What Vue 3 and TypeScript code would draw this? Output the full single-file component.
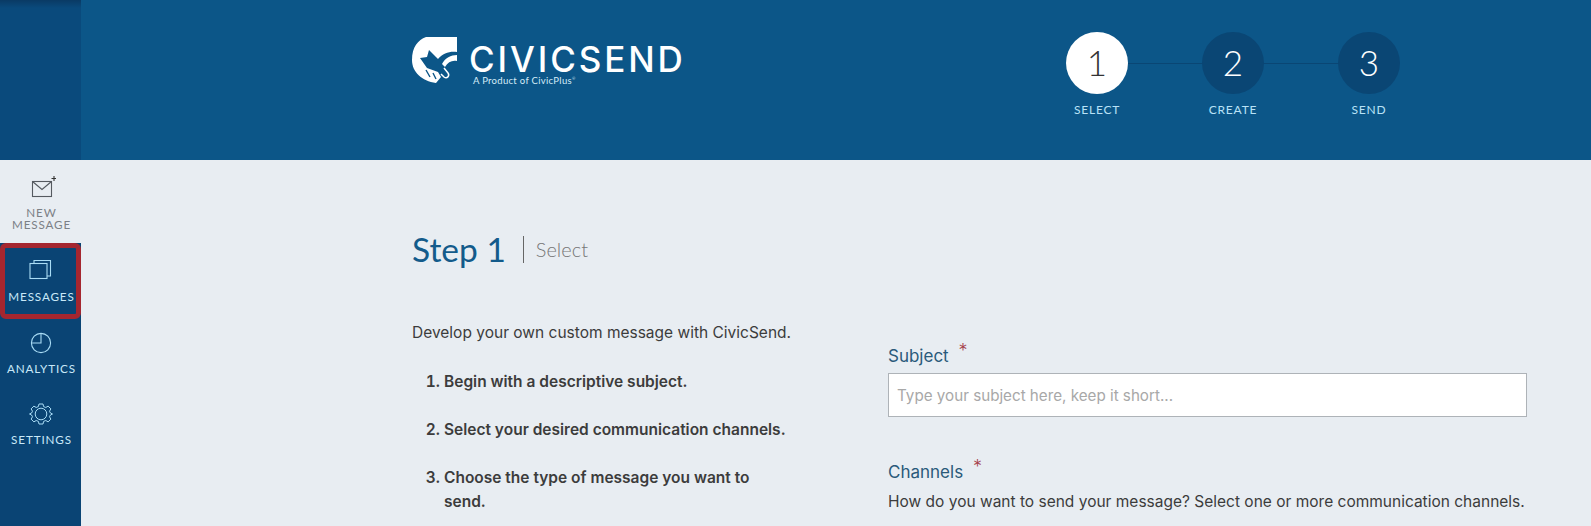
<script setup lang="ts">
const steps = [
  { n: 1, label: "SELECT", current: true },
  { n: 2, label: "CREATE" },
  { n: 3, label: "SEND" },
];

const instructions = [
  "Begin with a descriptive subject.",
  "Select your desired communication channels.",
  "Choose the type of message you want to send.",
];
</script>

<template>
  <div class="page">
    <header class="top">
      <div class="top-corner"></div>
      <div class="top-bar">
        <div class="logo">
          <svg class="logo-mark" viewBox="0 0 45 46" width="45" height="46" fill="#fff">
            <!-- main body of the mark -->
            <path d="M45 0 V15 C38 14 31 16 26 22 L17 13 L15 20 L8 21 L15 31 L26 35 L29 40 L24 46 C10 44 0 35 0 23 C0 10 6 3 14 0 Z" />
            <path d="M14 33 L18 40 M21 36 L24 42" fill="none" stroke="#0c5688" stroke-width="1.4" />
            <path d="M45 18 V24 C40 23 36 25 33 30 L30 27 C33 21 39 18 45 18 Z" />
            <path d="M32 31 L36 36 C38 39 35 42 32 40 L29 37" fill="none" stroke="#fff" stroke-width="1.5" />
          </svg>
          <div class="logo-text">
            <div class="logo-name">CIVICSEND</div>
            <div class="logo-sub">A Product of CivicPlus<sup>®</sup></div>
          </div>
        </div>
        <div class="steps">
          <div v-for="s in steps" :key="s.n" class="step">
            <div class="step-circle" :class="{ current: s.current }">{{ s.n }}</div>
            <div class="step-label">{{ s.label }}</div>
          </div>
        </div>
      </div>
    </header>

    <div class="body">
      <nav class="side">
        <div class="side-light">
          <div class="nav-item light">
            <svg viewBox="0 0 30 26" width="30" height="26" fill="none" stroke="#555a60" stroke-width="1.1">
              <rect x="6.5" y="6.5" width="19" height="15" />
              <path d="M6.5 6.5 L16 14.5 L25.5 6.5" />
              <path d="M28 1 V6 M25.5 3.5 H30.5" stroke="#333" />
            </svg>
            <div class="nav-label"><span>NEW</span><span>MESSAGE</span></div>
          </div>
        </div>
        <div class="nav-item active">
          <svg viewBox="0 0 26 24" width="26" height="24" fill="none" stroke="#a9dcf5" stroke-width="1.1">
            <rect x="2" y="5.5" width="17" height="15" />
            <path d="M6 5.5 V2.5 H22.5 V18 H19" />
          </svg>
          <div class="nav-label"><span>MESSAGES</span></div>
        </div>
        <div class="nav-item">
          <svg viewBox="0 0 24 24" width="24" height="24" fill="none" stroke="#a9dcf5" stroke-width="1.1">
            <circle cx="12" cy="12" r="9.6" />
            <path d="M12 2.4 V12 H2.4" />
          </svg>
          <div class="nav-label"><span>ANALYTICS</span></div>
        </div>
        <div class="nav-item">
          <svg viewBox="0 0 24 24" width="24" height="24" fill="none" stroke="#a9dcf5" stroke-width="1">
            <circle cx="12" cy="12" r="5.8" />
            <path d="M10 2 H14 L14.6 4.6 L16.8 5.5 L19.1 4.1 L21.9 6.9 L20.5 9.2 L21.4 11 L23.5 12 L21.4 13 L20.5 14.8 L21.9 17.1 L19.1 19.9 L16.8 18.5 L14.6 19.4 L14 22 H10 L9.4 19.4 L7.2 18.5 L4.9 19.9 L2.1 17.1 L3.5 14.8 L2.6 13 L0.5 12 L2.6 11 L3.5 9.2 L2.1 6.9 L4.9 4.1 L7.2 5.5 L9.4 4.6 Z" stroke-linejoin="round" />
          </svg>
          <div class="nav-label"><span>SETTINGS</span></div>
        </div>
      </nav>

      <main class="main">
        <h1 class="title">
          <span class="title-step">Step 1</span>
          <span class="title-name">Select</span>
        </h1>
        <div class="columns">
          <section class="intro">
            <p>Develop your own custom message with CivicSend.</p>
            <ol>
              <li v-for="item in instructions" :key="item">{{ item }}</li>
            </ol>
          </section>
          <section class="form">
            <label class="field-label">Subject <span class="req">*</span></label>
            <input class="subject" type="text" placeholder="Type your subject here, keep it short..." />
            <label class="field-label channels">Channels <span class="req">*</span></label>
            <p class="hint">How do you want to send your message? Select one or more communication channels.</p>
          </section>
        </div>
      </main>
    </div>
  </div>
</template>

<style scoped>
.page {
  width: 1591px;
  height: 526px;
  overflow: hidden;
  font-family: Lato, "Open Sans", sans-serif;
  background: #e8edf2;
}

.top {
  display: flex;
  height: 160px;
}

.top-corner {
  width: 81px;
  background: linear-gradient(to bottom, #0a3a64 0, #0a4a7c 8px, #0a4a7c 100%);
}

.top-bar {
  flex: 1;
  display: flex;
  background: #0c5688;
  padding: 32px 0 0 331px;
}

.logo {
  display: flex;
  align-items: flex-start;
  gap: 12px;
  width: 654px;
  padding-top: 5px;
}

.logo-name {
  font-family: Inter, sans-serif;
  font-size: 35px;
  line-height: 30px;
  font-weight: 500;
  letter-spacing: 2.9px;
  color: #fff;
  margin-top: 7px;
}

.logo-sub {
  font-size: 9.5px;
  line-height: 11px;
  color: #d6ecf8;
  margin-left: 4px;
  margin-top: 1px;
  letter-spacing: 0.3px;
}

.logo-sub sup {
  font-size: 4px;
  line-height: 0;
}

.steps {
  display: flex;
  gap: 74px;
  background: linear-gradient(#0a4674, #0a4674) no-repeat center 31px / 270px 1px;
  height: 90px;
}

.step {
  width: 62px;
  display: flex;
  flex-direction: column;
  align-items: center;
}

.step-circle {
  width: 62px;
  height: 62px;
  border-radius: 50%;
  background: #0a4674;
  color: #fff;
  font-size: 35px;
  font-weight: 300;
  line-height: 60px;
  text-align: center;
}

.step-circle.current {
  background: #fff;
  color: #333;
}

.step-label {
  margin-top: 8px;
  font-size: 12px;
  letter-spacing: 0.8px;
  color: #b9e2f7;
  white-space: nowrap;
}

.body {
  display: flex;
  height: 366px;
}

.side {
  width: 81px;
  background: #0a4474;
}

.side-light {
  background: #e8edf2;
  height: 83px;
  padding-top: 15px;
  box-sizing: border-box;
}

.nav-item {
  display: flex;
  flex-direction: column;
  align-items: center;
  color: #c8e8f8;
  height: 71px;
  padding-top: 13px;
  box-sizing: border-box;
}

.nav-item.light {
  color: #7b8086;
  height: auto;
  padding: 0;
}

.nav-item.active {
  height: 76px;
  margin-bottom: -1px;
  border: 5px solid #a5262f;
  border-radius: 6px;
  padding-top: 10px;
}

.nav-label {
  display: flex;
  flex-direction: column;
  align-items: center;
  margin-top: 7px;
  padding-left: 2px;
  font-size: 11.7px;
  line-height: 12px;
  letter-spacing: 0.85px;
  white-space: nowrap;
}

.nav-item.active .nav-label {
  margin-top: 8px;
}

.nav-item.light .nav-label {
  margin-top: 5px;
}

.main {
  flex: 1;
  padding: 0 0 0 331px;
}

.title {
  margin: 69px 0 0;
  display: flex;
  align-items: center;
  font-weight: 400;
  height: 40px;
}

.title-step {
  font-size: 33.5px;
  color: #135b8b;
  padding-right: 17px;
  border-right: 1px solid #666;
  line-height: 27px;
}

.title-name {
  font-size: 20px;
  font-weight: 300;
  color: #777;
  margin-left: 12px;
}

.columns {
  display: flex;
}

.intro {
  width: 378px;
  margin-right: 98px;
  font-family: Inter, sans-serif;
  font-size: 15.5px;
  color: #3c3c3c;
}

.intro p {
  margin: 54px 0 0;
  line-height: 20px;
  white-space: nowrap;
}

.intro ol {
  margin: 27px 0 0;
  padding-left: 32px;
}

.intro li {
  font-weight: 600;
  line-height: 24px;
  margin-bottom: 24px;
}

.form {
  width: 640px;
  padding-top: 77px;
  font-family: Inter, sans-serif;
}

.field-label {
  display: block;
  font-size: 17px;
  line-height: 20px;
  color: #2a5a7a;
}

.req {
  color: #a5404a;
  font-size: 18px;
  font-weight: 300;
  margin-left: 5px;
  position: relative;
  top: -5px;
}

.subject {
  display: block;
  box-sizing: border-box;
  width: 639px;
  height: 44px;
  margin-top: 7px;
  padding: 0 8px;
  border: 1px solid #aeb3b8;
  background: #fff;
  font-family: inherit;
  font-size: 15.2px;
  outline: none;
}

.subject::placeholder {
  color: #a8a8a8;
}

.channels {
  margin-top: 45px;
}

.hint {
  margin: 10px 0 0;
  font-size: 15.5px;
  line-height: 20px;
  color: #3c3c3c;
  white-space: nowrap;
}
</style>
